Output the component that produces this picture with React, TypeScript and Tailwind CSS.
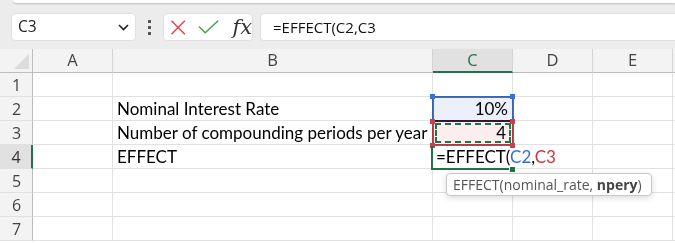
import React from "react";

const UI = { fontFamily: '"Open Sans", "Noto Sans", sans-serif' };
const CELL = { fontFamily: 'Lato, "Open Sans", sans-serif' };

const colW = [80, 320, 80, 80, 80, 80];
const colNames = ["A", "B", "C", "D", "E", ""];

function Row({ n, children }: { n: number; children?: React.ReactNode[] }) {
  const active = n === 4;
  return (
    <div className="flex h-[24px] shrink-0">
      <div
        className={
          "w-[33px] shrink-0 flex items-center justify-center border-b border-[#e1e1e1] text-[16px] " +
          (active
            ? "bg-[#e1e1e1] text-[#333] border-r-2 border-r-[#217346]"
            : "bg-[#f3f3f3] text-[#444] border-r border-r-[#bdbdbd]")
        }
        style={UI}
      >
        <span className="pl-[1px]">{n}</span>
      </div>
      {colW.map((w, i) => (
        <div
          key={i}
          className={
            "shrink-0 border-b border-[#e1e1e1] flex items-end pb-[1px] leading-[20px] whitespace-nowrap text-[17px] text-black " +
            (n === 4 && i === 2 ? "" : "border-r border-r-[#e1e1e1]")
          }
          style={{ width: w, ...CELL }}
        >
          {children ? children[i] : null}
        </div>
      ))}
    </div>
  );
}

export default function App() {
  return (
    <div className="relative w-[675px] h-[243px] overflow-hidden bg-white">
      {/* top toolbar */}
      <div className="h-[49px] bg-[#ececec] flex flex-col">
        <div className="ml-[13px] h-[3px] bg-white rounded-bl-[4px] shadow-[0_1px_2px_rgba(0,0,0,0.2)]" />
        <div className="flex items-start pt-[10px] pl-[11px]" style={UI}>
          <div className="w-[125px] h-[28px] bg-white rounded-[4px] border border-[#e0e0e0] flex items-center justify-between pl-[6px] pr-[6px] text-[15.5px] text-[#222]">
            <span>C3</span>
            <svg width="11" height="7" viewBox="0 0 11 7">
              <path d="M1 1 L5.5 5.5 L10 1" fill="none" stroke="#222" strokeWidth="1.6" />
            </svg>
          </div>
          <div className="w-[27px] h-[28px] flex flex-col items-center justify-center gap-[3px]">
            <div className="w-[3px] h-[3px] bg-[#555]" />
            <div className="w-[3px] h-[3px] bg-[#555]" />
            <div className="w-[3px] h-[3px] bg-[#555]" />
          </div>
          <div className="w-[90px] h-[28px] bg-white rounded-[4px] border border-[#e0e0e0] flex items-center pl-[6px]">
            <svg width="17" height="17" viewBox="0 0 17 17">
              <path d="M1.5 1.5 L15.5 15.5 M15.5 1.5 L1.5 15.5" stroke="#e5484d" strokeWidth="1.6" />
            </svg>
            <svg width="22" height="14" viewBox="0 0 22 14" className="ml-[12px]">
              <path d="M1 6.5 L7.5 13 L21 0.5" fill="none" stroke="#3da64a" strokeWidth="1.6" />
            </svg>
            <span
              className="ml-[13px] text-[21px] italic text-[#333] leading-none"
              style={{ fontFamily: '"DejaVu Serif", "Liberation Serif", serif' }}
            >
              fx
            </span>
          </div>
          <div className="ml-[7px] flex-1 h-[28px] bg-white rounded-l-[4px] border border-r-0 border-[#e0e0e0] flex items-center pl-[12px] text-[15px] text-[#111]">
            =EFFECT(C2,C3
          </div>
        </div>
      </div>

      {/* column headers */}
      <div className="flex h-[24px] bg-[#f3f3f3]" style={UI}>
        <div className="relative w-[33px] shrink-0 border-r border-b border-[#bdbdbd]">
          <div className="absolute right-[3px] bottom-[3px] w-0 h-0 border-l-[15px] border-l-transparent border-b-[15px] border-b-[#dcdcdc]" />
        </div>
        {colW.map((w, i) => (
          <div
            key={i}
            className={
              "shrink-0 flex items-center justify-center text-[16.5px] border-r border-[#d4d4d4] " +
              (i === 2
                ? "bg-[#e1e1e1] text-[#217346] border-b-2 border-b-[#217346]"
                : "text-[#444] border-b border-b-[#bdbdbd]")
            }
            style={{ width: w }}
          >
            {colNames[i]}
          </div>
        ))}
      </div>

      {/* rows */}
      <Row n={1} />
      <Row
        n={2}
        children={[
          null,
          <span className="pl-[4px]">Nominal Interest Rate</span>,
          <span className="ml-auto pr-[4px]">10%</span>,
          null,
          null,
          null,
        ]}
      />
      <Row
        n={3}
        children={[
          null,
          <span className="pl-[4px]">Number of compounding periods per year</span>,
          <span className="ml-auto pr-[6px]">4</span>,
          null,
          null,
          null,
        ]}
      />
      <Row
        n={4}
        children={[
          null,
          <span className="pl-[4px]">EFFECT</span>,
          <span className="pl-[3px]">
            =EFFECT(<span className="text-[#3a6fd0]">C2</span>,<span className="text-[#d0343f]">C3</span>
          </span>,
          null,
          null,
          null,
        ]}
      />
      <Row n={5} />
      <Row n={6} />
      <Row n={7} />

      {/* C2 blue range */}
      <div className="absolute left-[432px] top-[96px] w-[82px] h-[26px] border-2 border-[#3f70cc] bg-[#3f70cc]/10 mix-blend-multiply" />
      <div className="absolute left-[430px] top-[94px] w-[5px] h-[5px] bg-[#3f70cc]" />
      <div className="absolute left-[510px] top-[94px] w-[5px] h-[5px] bg-[#3f70cc]" />
      {/* C3 red range */}
      <div className="absolute left-[432px] top-[120px] w-[82px] h-[26px] border-2 border-[#c8404a] bg-[#e0505a]/10 mix-blend-multiply" />
      <div className="absolute left-[435px] top-[123px] w-[76px] h-[20px] border-2 border-dashed border-[#217346]" />
      <div className="absolute left-[430px] top-[119px] w-[5px] h-[5px] bg-[#c8404a]" />
      <div className="absolute left-[510px] top-[119px] w-[5px] h-[5px] bg-[#c8404a]" />
      <div className="absolute left-[430px] top-[143px] w-[5px] h-[5px] bg-[#c8404a]" />
      <div className="absolute left-[510px] top-[143px] w-[5px] h-[5px] bg-[#c8404a]" />
      {/* C4 active */}
      <div className="absolute left-[431px] top-[146px] w-[79px] h-[24px] border-l-2 border-b-2 border-[#217346]" />
      <div className="absolute left-[509px] top-[166px] w-[7px] h-[7px] bg-[#217346] border border-white" />

      {/* tooltip */}
      <div
        className="absolute left-[446px] top-[173px] w-[206px] h-[23px] bg-white border border-[#c8c8c8] rounded-[4px] shadow-[0_2px_6px_rgba(0,0,0,0.15)] flex items-center pl-[6px] text-[14px] text-[#555] whitespace-nowrap"
        style={UI}
      >
        <span>EFFECT(nominal_rate,&nbsp;</span>
        <b className="font-bold text-[#444]">npery</b>
        <span>)</span>
      </div>
    </div>
  );
}
